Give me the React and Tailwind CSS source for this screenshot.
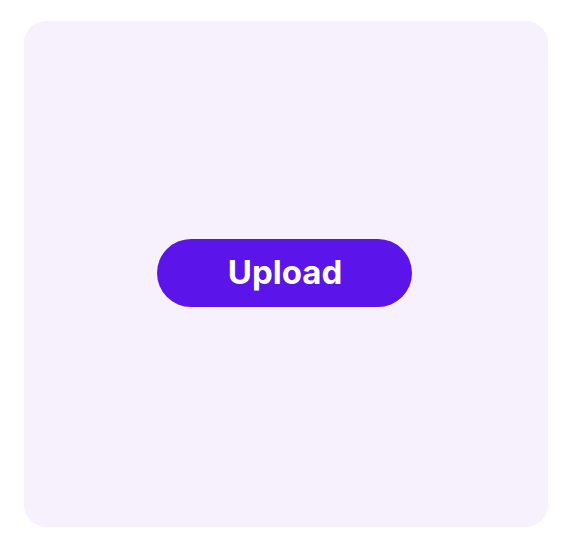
export default function App() {
  return (
    <div className="w-[570px] h-[546px] bg-white pt-[21px] pl-[24px]">
      <div className="w-[524px] h-[506px] rounded-[22px] bg-[#f7f1fd] flex items-center justify-center">
        <button
          className="w-[255px] h-[68px] rounded-full bg-[#5b14ea] text-white text-[33px] font-bold mb-[3px] mr-[4px] pl-[2px]"
          style={{ fontFamily: 'Inter, "Open Sans", sans-serif' }}
        >
          Upload
        </button>
      </div>
    </div>
  )
}
